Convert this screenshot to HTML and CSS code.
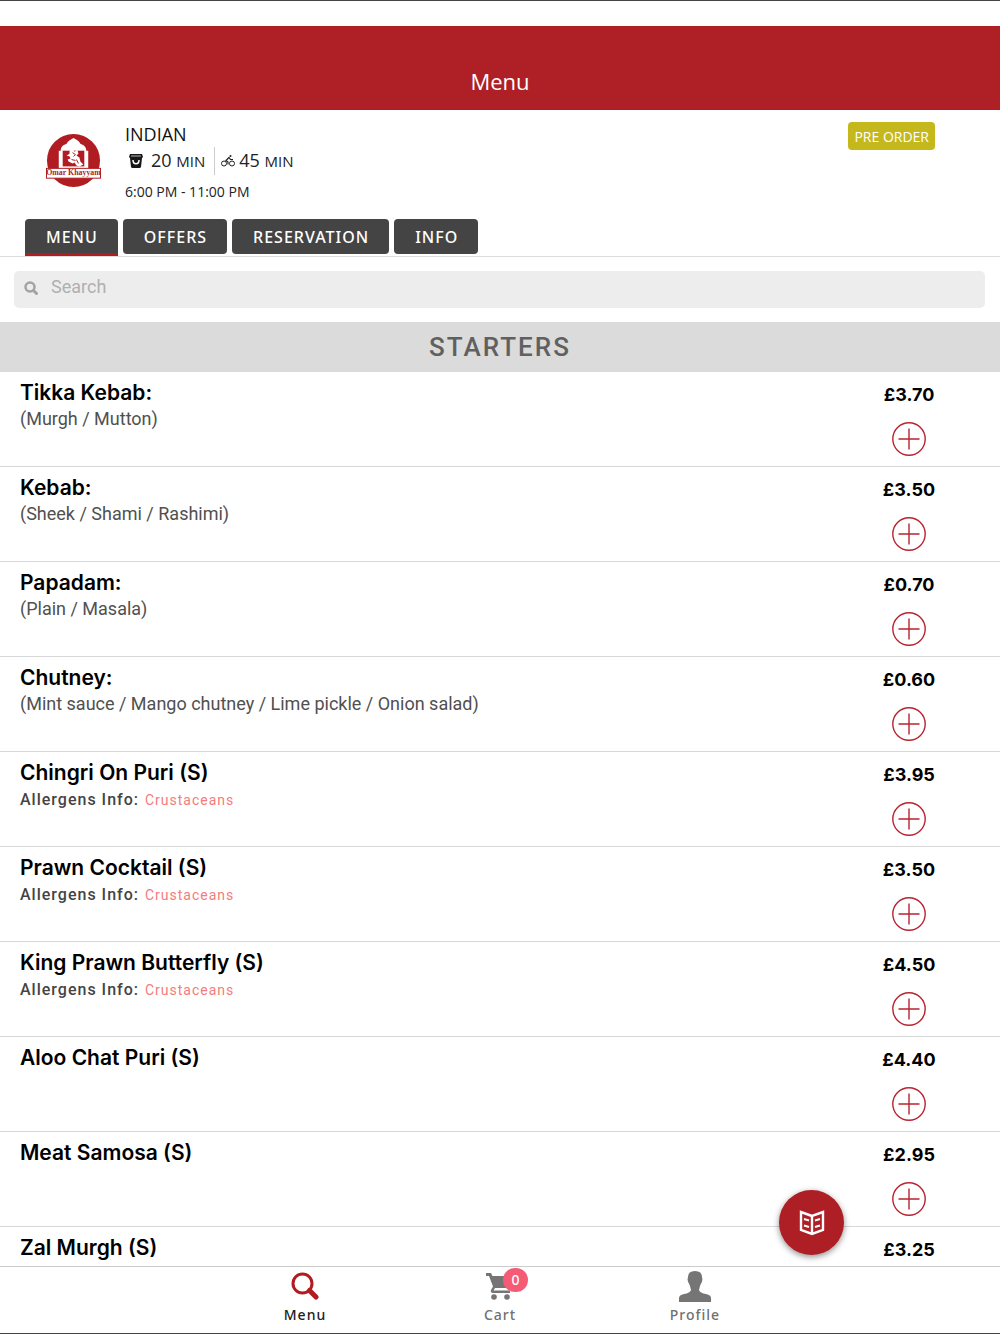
FILE: index.html
```html
<!DOCTYPE html>
<html lang="en">
<head>
  <meta charset="UTF-8">
  <meta name="viewport" content="width=device-width, initial-scale=1.0">
  <title>Menu</title>
  <link rel="stylesheet" href="styles.css">
</head>
<body>
  <div class="app">
    <header class="header">
      <h1>Menu</h1>
    </header>

    <section class="restaurant">
      <div class="summary">
        <svg class="logo" viewBox="0 0 56 56" role="img" aria-label="Omar Khayyam">
          <circle cx="28" cy="28" r="27" fill="#b01c22"/>
          <path d="M13 37V18h2c0-4 3-6 6-7 1-3 4-4 7-6 3 2 6 3 7 6 3 1 6 3 6 7h2v19z" fill="#fff"/>
          <rect x="17" y="18" width="22" height="16" fill="#b01c22"/>
          <path d="M24 18l3-2 2 3 3-2 1 4-2 2 3 2 1 4 3 3-4 2-3-1-2-3-2 1-4-2-1-2 3-1-1-2-3-1 3-2z" fill="#fff"/>
          <path d="M27 20l3 2-2 2m-2 3l4 1m1-1l2 4" stroke="#b01c22" fill="none"/>
          <rect x="0.500" y="36" width="55" height="10" fill="#fff" stroke="#b01c22"/>
          <text x="28" y="43" text-anchor="middle">Omar Khayyam</text>
        </svg>
        <div class="details">
          <h2>INDIAN</h2>
          <div class="times">
            <div class="time pickup">
              <svg class="bag" viewBox="0 0 14 14" aria-hidden="true">
                <path d="M1 0h12l1 3-1 1-1 9-1 1H3l-1-1-1-9-1-1z" fill="#161616"/>
                <path d="M2 2h10" stroke="#fff" stroke-width="0.700"/>
                <path d="M4 6c0 5 6 5 6 0" fill="none" stroke="#fff" stroke-width="1.5"/>
              </svg>
              <span>20 <small>MIN</small></span>
            </div>
            <div class="time">
              <svg class="bike" viewBox="0 0 14 12" fill="none" stroke="#222" aria-hidden="true">
                <circle cx="3" cy="8.5" r="2.5"/>
                <circle cx="11" cy="8.5" r="2.5"/>
                <path d="M7 9.500V7L5 5.500 8 2.500l1.500 2H12" stroke-width="1.2"/>
                <circle cx="9.500" cy="1" r="1" fill="#222" stroke="none"/>
              </svg>
              <span>45 <small>MIN</small></span>
            </div>
          </div>
          <p>6:00 PM - 11:00 PM</p>
        </div>
        <button type="button" class="pre-order">PRE ORDER</button>
      </div>
      <nav class="tabs">
        <button type="button" class="tab active">MENU</button>
        <button type="button" class="tab">OFFERS</button>
        <button type="button" class="tab">RESERVATION</button>
        <button type="button" class="tab">INFO</button>
      </nav>
    </section>

    <form class="search">
      <label for="search" class="search-box">
        <svg viewBox="0 0 28 28" fill="none" stroke="#a3a3a3" stroke-width="5" aria-hidden="true">
          <circle cx="12" cy="12" r="9"/>
          <path d="M19 19l6 6" stroke-width="6" stroke-linecap="round"/>
        </svg>
        <input type="search" id="search" placeholder="Search" aria-label="Search">
      </label>
    </form>

    <main class="menu">
      <h2 class="category">STARTERS</h2>
      <ul class="items" id="items"></ul>
    </main>

    <button type="button" class="fab" aria-label="Categories">
      <svg viewBox="0 0 26 26" fill="none" stroke="#fff" stroke-width="2">
        <path d="M13 6L2 2v18l11 4 11-4V2zM13 6v18" stroke-width="2.4"/>
        <path d="M5 9l5 1.500M5 15.500l5 1.500M21 9l-5 1.500M21 15.500l-5 1.500"/>
      </svg>
    </button>

    <nav class="bottom-nav">
      <a href="#menu" class="nav-item active">
        <svg class="nav-icon" viewBox="0 0 28 28" fill="none" stroke="#b01c22" aria-hidden="true">
          <circle cx="11.500" cy="11.500" r="9.500" stroke-width="3"/>
          <path d="M18.500 18.500l6.500 6.500" stroke-width="5" stroke-linecap="round"/>
        </svg>
        <span>Menu</span>
      </a>
      <a href="#cart" class="nav-item">
        <span class="cart">
          <svg class="nav-icon" viewBox="0 0 28 28" fill="#757575" aria-hidden="true">
            <path d="M0 1h5l1.500 3H26q1 0 .5 1.500l-5 9q-1 1.500-2.500 1.500H9l-1.500 2.500H24V21H7q-3 0-2-3l2-3.500L3 4H0z"/>
            <circle cx="8" cy="25" r="2.800"/>
            <circle cx="21" cy="25" r="2.800"/>
          </svg>
          <span class="badge">0</span>
        </span>
        <span>Cart</span>
      </a>
      <a href="#profile" class="nav-item">
        <svg class="nav-icon profile" viewBox="0 0 32 31" fill="#757575" aria-hidden="true">
          <path d="M9 6q0-6 7-6t7 6q1 2 0 5-1 1-2 4l-1 4q1 3 7 4 5 1 5 4v4H0v-4q0-3 5-4 6-1 7-4l-1-4q-1-3-2-4-1-3 0-5z"/>
        </svg>
        <span>Profile</span>
      </a>
    </nav>
  </div>

  <script>
    const items = [
      { name: "Tikka Kebab:", description: "(Murgh / Mutton)", price: "3.70" },
      { name: "Kebab:", description: "(Sheek / Shami / Rashimi)", price: "3.50" },
      { name: "Papadam:", description: "(Plain / Masala)", price: "0.70" },
      { name: "Chutney:", description: "(Mint sauce / Mango chutney / Lime pickle / Onion salad)", price: "0.60" },
      { name: "Chingri On Puri (S)", allergens: "Crustaceans", price: "3.95" },
      { name: "Prawn Cocktail (S)", allergens: "Crustaceans", price: "3.50" },
      { name: "King Prawn Butterfly (S)", allergens: "Crustaceans", price: "4.50" },
      { name: "Aloo Chat Puri (S)", price: "4.40" },
      { name: "Meat Samosa (S)", price: "2.95" },
      { name: "Zal Murgh (S)", price: "3.25" }
    ];

    const itemList = document.getElementById("items");
    items.forEach(item => {
      const li = document.createElement("li");
      li.className = "item";
      li.innerHTML = `
        <div class="item-info">
          <h3>${item.name}</h3>
          ${item.description ? `<p class="description">${item.description}</p>` : ""}
          ${item.allergens ? `<p class="allergens">Allergens Info: <span>${item.allergens}</span></p>` : ""}
        </div>
        <div class="item-order">
          <span class="price">£${item.price}</span>
          <button type="button" class="add" aria-label="Add ${item.name}">
            <svg viewBox="0 0 34 34" fill="none" stroke="#b8232f" stroke-width="1.4">
              <circle cx="17" cy="17" r="16.200"/>
              <path d="M17 6.500v21M6.500 17h21"/>
            </svg>
          </button>
        </div>
      `;
      itemList.appendChild(li);
    });
  </script>
</body>
</html>
```

FILE: styles.css
```css
* {
  box-sizing: border-box;
}

body {
  margin: 0;
  font-family: "Noto Sans", sans-serif;
  background-color: #fff;
  color: #222;
}

h1,
h2,
h3,
p,
ul {
  margin: 0;
  padding: 0;
}

button {
  font-family: inherit;
  cursor: pointer;
}

svg {
  display: block;
  flex-shrink: 0;
}

.app {
  position: relative;
  display: flex;
  flex-direction: column;
  height: 100vh;
  border-top: 1px solid #444;
  border-bottom: 1px solid #444;
}

.header {
  margin-top: 25px;
  padding: 40px 0 12px;
  background-color: #ae2026;
  border-bottom: 1px solid #9c2434;
  color: #fff;
  text-align: center;
}

.header h1 {
  font-family: "Open Sans", sans-serif;
  font-size: 22px;
  line-height: 31px;
  font-weight: 400;
}

.restaurant {
  border-bottom: 1px solid #ddd;
}

.summary {
  display: flex;
  align-items: flex-start;
  padding: 11px 65px 0 46px;
  font-family: "Open Sans", sans-serif;
}

.logo {
  width: 55px;
  height: 55px;
  margin-top: 12px;
}

.logo text {
  font-family: "Liberation Serif", serif;
  font-size: 8px;
  font-weight: bold;
  fill: #b01c22;
}

.details {
  flex: 1;
  padding-left: 24px;
}

.details h2 {
  font-size: 18px;
  line-height: 26px;
  font-weight: 400;
  color: #111;
}

.details p {
  font-size: 14px;
  line-height: 20px;
  margin-top: 7px;
}

.times {
  display: flex;
  font-size: 18px;
  line-height: 27px;
}

.times small {
  font-size: 15px;
}

.time {
  display: flex;
  align-items: center;
}

.pickup {
  gap: 8px;
  padding: 0 9px 0 4px;
  margin-right: 6px;
  border-right: 1px solid #ccc;
}

.bag {
  width: 14px;
  height: 14px;
}

.bike {
  width: 14px;
  height: 12px;
  margin-right: 4px;
}

.pre-order {
  height: 28px;
  margin-top: 1px;
  padding: 0 6px;
  border: 0;
  border-radius: 4px;
  background-color: #c5b81c;
  color: #fff;
  font-size: 14px;
}

.tabs {
  display: flex;
  align-items: flex-start;
  gap: 5px;
  padding: 17px 25px 0;
}

.tab {
  height: 35px;
  padding: 0 20px 0 21px;
  border: 0;
  border-radius: 4px;
  background-color: #444;
  color: #fff;
  font-size: 16px;
  font-weight: 500;
  letter-spacing: 1px;
}

.tab.active {
  height: 37px;
  padding-top: 1px;
  border-bottom: 3px solid #b01c22;
  border-radius: 4px 4px 0 0;
}

.search {
  padding: 14px 15px 14px 14px;
}

.search-box {
  display: flex;
  align-items: center;
  gap: 13px;
  height: 37px;
  padding: 0 10px 3px;
  border-radius: 5px;
  background-color: #ededed;
}

.search-box svg {
  width: 14px;
  height: 14px;
}

.search-box input {
  flex: 1;
  min-width: 0;
  padding: 0 0 3px;
  border: 0;
  outline: 0;
  background: none;
  font-family: Roboto, sans-serif;
  font-size: 18px;
}

.search-box input::placeholder {
  color: #b0b0b0;
}

.menu {
  flex: 1;
  min-height: 0;
  overflow: hidden;
}

.category {
  background-color: #dbdbdb;
  color: #606060;
  font-family: Roboto, sans-serif;
  font-size: 26px;
  line-height: 50px;
  font-weight: 500;
  letter-spacing: 2px;
  text-align: center;
}

.items {
  list-style: none;
}

.item {
  display: flex;
  justify-content: space-between;
  min-height: 95px;
  border-bottom: 1px solid #d8d8d8;
}

.item-info {
  padding: 7px 0 0 20px;
}

.item h3 {
  font-family: Inter, sans-serif;
  font-size: 21px;
  line-height: 27px;
  font-weight: 600;
  color: #000;
}

.description {
  font-family: Roboto, sans-serif;
  font-size: 18px;
  line-height: 26px;
  color: #505050;
}

.allergens {
  font-family: Roboto, sans-serif;
  font-size: 16px;
  line-height: 28px;
  font-weight: 500;
  letter-spacing: 1px;
  color: #444;
}

.allergens span {
  margin-left: 1px;
  font-size: 14px;
  font-weight: 400;
  color: #f47c7c;
}

.item-order {
  display: flex;
  flex-direction: column;
  align-items: center;
  width: 182px;
  padding-top: 11px;
}

.price {
  font-family: Inter, sans-serif;
  font-size: 18px;
  line-height: 24px;
  font-weight: 700;
  color: #000;
}

.add {
  width: 34px;
  height: 34px;
  margin-top: 15px;
  padding: 0;
  border: 0;
  background: none;
}

.fab {
  position: absolute;
  right: 156px;
  bottom: 78px;
  display: flex;
  align-items: center;
  justify-content: center;
  width: 65px;
  height: 65px;
  padding: 0;
  border: 0;
  border-radius: 50%;
  background-color: #ae1e25;
  box-shadow: 0 2px 6px rgba(0, 0, 0, 0.45);
}

.fab svg {
  width: 26px;
  height: 26px;
}

.bottom-nav {
  display: flex;
  justify-content: center;
  height: 67px;
  border-top: 1px solid #ccc;
  background-color: #fff;
}

.nav-item {
  display: flex;
  flex-direction: column;
  align-items: center;
  gap: 5px;
  width: 195px;
  padding-top: 5px;
  color: #707070;
  font-size: 14px;
  line-height: 20px;
  font-weight: 500;
  letter-spacing: 1px;
  text-decoration: none;
}

.nav-item.active {
  color: #222;
}

.nav-icon {
  width: 28px;
  height: 28px;
}

.nav-icon.profile {
  width: 32px;
  height: 31px;
  margin-top: -1px;
  margin-bottom: -2px;
}

.cart {
  position: relative;
}

.badge {
  position: absolute;
  top: -4px;
  left: 17px;
  width: 25px;
  border-radius: 12px;
  background-color: #f55b75;
  color: #fff;
  line-height: 24px;
  letter-spacing: 0;
  text-align: center;
}
```
